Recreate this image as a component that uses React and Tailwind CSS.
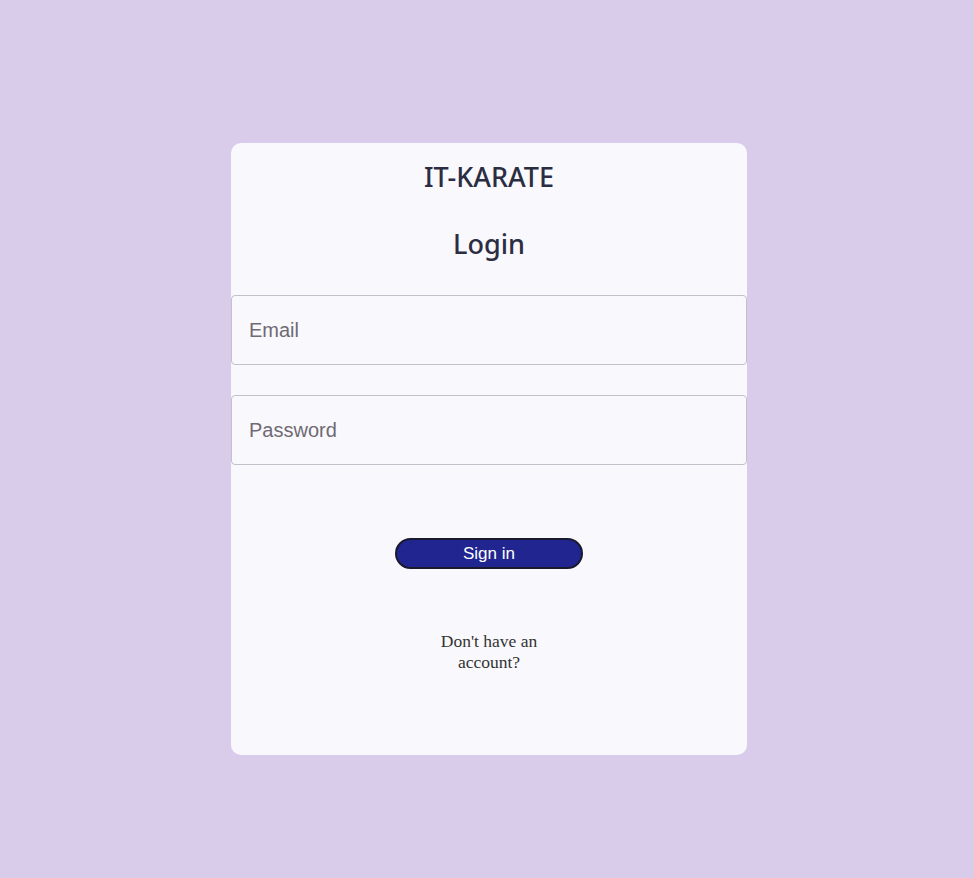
export default function App() {
  return (
    <div className="min-h-[878px] w-full bg-[#d9cbea] flex justify-center pt-[143px] pl-[4px]">
      <div className="w-[516px] h-[612px] bg-[#f9f8fd] rounded-[10px] flex flex-col items-center">
        <h1 className="mt-[18px] h-[32px] leading-[32px] text-[27px] font-medium text-[#2b2d42] font-['Noto_Sans',sans-serif]">
          IT-KARATE
        </h1>
        <h2 className="mt-[35px] h-[32px] leading-[32px] text-[27px] font-medium text-[#2b2d42] font-['Noto_Sans',sans-serif]">
          Login
        </h2>
        <div className="mt-[35px] w-full flex flex-col gap-[30px]">
          <input
            placeholder="Email"
            className="w-full h-[70px] border border-[#c4c0cb] rounded-[4px] px-[17px] text-[20px] bg-transparent font-['Liberation_Sans',Arial,sans-serif] placeholder:text-[#6f6a73] outline-none"
          />
          <input
            type="password"
            placeholder="Password"
            className="w-full h-[70px] border border-[#c4c0cb] rounded-[4px] px-[17px] text-[20px] bg-transparent font-['Liberation_Sans',Arial,sans-serif] placeholder:text-[#6f6a73] outline-none"
          />
        </div>
        <button className="mt-[73px] w-[188px] h-[31px] rounded-full bg-[#202590] border-2 border-[#1a1a2e] text-white text-[17px] leading-none font-['Liberation_Sans',Arial,sans-serif]">
          Sign in
        </button>
        <p className="mt-[62px] w-[112px] text-center text-[17.5px] leading-[21px] text-[#333] font-['Liberation_Serif','Times_New_Roman',serif]">
          Don't have an account?
        </p>
      </div>
    </div>
  );
}
